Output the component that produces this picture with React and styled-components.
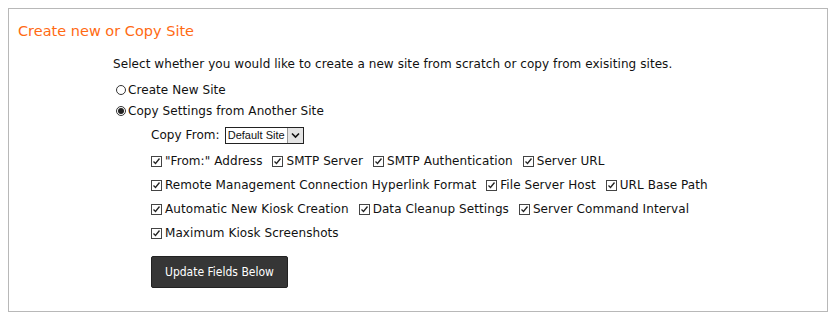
import React from "react";
import styled, { createGlobalStyle } from "styled-components";

const Global = createGlobalStyle`
  body { margin: 8px; background: #fff; font-family: "DejaVu Sans", Verdana, sans-serif; }
`;

const Panel = styled.section`
  border: 1px solid #b8b8b8;
  box-sizing: border-box;
  height: 304px;
  padding: 12px 9px 0 9px;
`;

const Title = styled.h2`
  margin: 0;
  font-family: "DejaVu Sans", sans-serif;
  font-weight: normal;
  font-size: 14.5px;
  color: #ff6a13;
  line-height: 20px;
`;

const Body = styled.div`
  margin-left: 95px;
  margin-top: 14px;
  font-size: 12px;
  letter-spacing: 0.07px;
  color: #111;
`;

const Intro = styled.p`
  margin: 0 0 6px 0;
  line-height: 18px;
`;

const OptionRow = styled.label`
  display: flex;
  align-items: center;
  height: 21px;
  padding-left: 3px;
`;

const Radio = styled.span`
  width: 10px;
  height: 10px;
  border: 1px solid #333;
  border-radius: 50%;
  margin-right: 2px;
  display: inline-flex;
  align-items: center;
  justify-content: center;
  box-sizing: border-box;
  &::after {
    content: "";
    width: 6px;
    height: 6px;
    border-radius: 50%;
    background: ${(p) => (p.$on ? "#222" : "transparent")};
  }
`;

const Sub = styled.div`
  margin-left: 38px;
`;

const CopyFrom = styled.div`
  display: flex;
  align-items: center;
  height: 28px;
  gap: 5px;
`;

const Select = styled.div`
  display: inline-flex;
  align-items: center;
  height: 17px;
  border: 1px solid #222;
  font-family: "Liberation Sans", Arial, sans-serif;
  font-size: 11px;
  letter-spacing: 0;
  box-sizing: border-box;
  padding-left: 2px;
`;

const Arrow = styled.span`
  width: 15px;
  height: 15px;
  margin-left: 2px;
  background: #e4e4e4;
  border-left: 1px solid #999;
  display: inline-flex;
  align-items: center;
  justify-content: center;
`;

const CheckRow = styled.div`
  display: flex;
  align-items: center;
  height: 24px;
  gap: 10px;
`;

const CheckItem = styled.label`
  display: inline-flex;
  align-items: center;
  gap: 3px;
  white-space: nowrap;
`;

const Box = styled.span`
  width: 11px;
  height: 11px;
  border: 1px solid #444;
  box-sizing: border-box;
  display: inline-flex;
  align-items: center;
  justify-content: center;
  background: #fff;
`;

const Button = styled.button`
  margin-top: 11px;
  background: #363636;
  color: #fff;
  border: 1px solid #222;
  border-radius: 2px;
  font-family: "DejaVu Sans Condensed", "DejaVu Sans", sans-serif;
  font-size: 12px;
  height: 32px;
  padding: 0 13px;
  cursor: pointer;
`;

const Check = () => (
  <Box>
    <svg width="9" height="9" viewBox="0 0 9 9">
      <path d="M1.5 4.5 L3.5 6.5 L7.5 1.5" fill="none" stroke="#222" strokeWidth="1.3" />
    </svg>
  </Box>
);

const rows = [
  ['"From:" Address', "SMTP Server", "SMTP Authentication", "Server URL"],
  ["Remote Management Connection Hyperlink Format", "File Server Host", "URL Base Path"],
  ["Automatic New Kiosk Creation", "Data Cleanup Settings", "Server Command Interval"],
  ["Maximum Kiosk Screenshots"],
];

export default function App() {
  return (
    <>
      <Global />
      <Panel>
        <Title>Create new or Copy Site</Title>
        <Body>
          <Intro>
            Select whether you would like to create a new site from scratch or copy from exisiting sites.
          </Intro>
          <OptionRow>
            <Radio />
            Create New Site
          </OptionRow>
          <OptionRow>
            <Radio $on />
            Copy Settings from Another Site
          </OptionRow>
          <Sub>
            <CopyFrom>
              Copy From:
              <Select>
                Default Site
                <Arrow>
                  <svg width="9" height="7" viewBox="0 0 9 7">
                    <path d="M1 1.5 L4.5 5 L8 1.5" fill="none" stroke="#111" strokeWidth="1.6" />
                  </svg>
                </Arrow>
              </Select>
            </CopyFrom>
            {rows.map((r, i) => (
              <CheckRow key={i}>
                {r.map((t) => (
                  <CheckItem key={t}>
                    <Check />
                    {t}
                  </CheckItem>
                ))}
              </CheckRow>
            ))}
            <Button>Update Fields Below</Button>
          </Sub>
        </Body>
      </Panel>
    </>
  );
}
